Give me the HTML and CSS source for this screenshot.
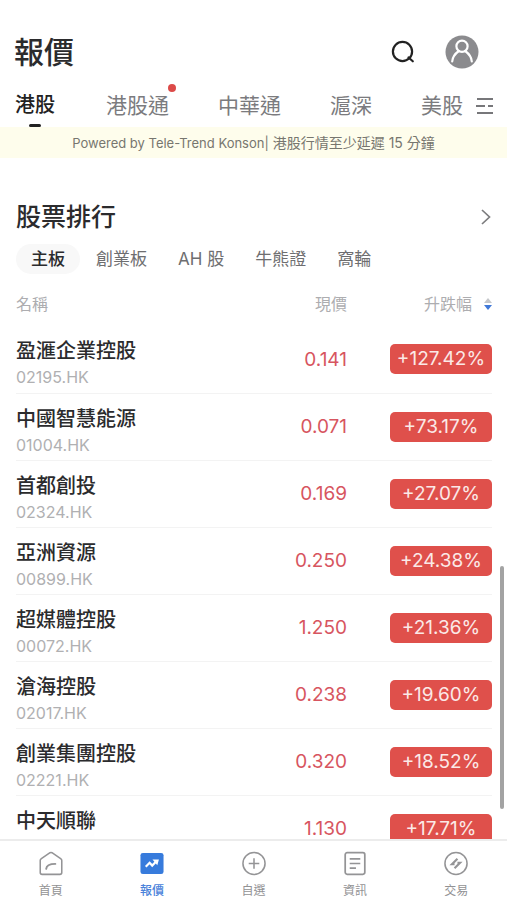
FILE: index.html
```html
<!DOCTYPE html>
<html lang="zh-Hant">
<head>
<meta charset="utf-8">
<meta name="viewport" content="width=device-width, initial-scale=1">
<title>報價</title>
<link rel="stylesheet" href="styles.css">
</head>
<body>
<div class="app">
  <header class="topbar">
    <h1>報價</h1>
    <div class="actions">
      <button class="icon-btn" type="button" aria-label="搜尋">
        <svg width="26" height="26" viewBox="0 0 26 26" fill="none" stroke="#222" stroke-width="2.2" stroke-linecap="round"><circle cx="11.5" cy="12.5" r="9.6"/><path d="M17.5 18.5L21.8 22.3"/></svg>
      </button>
      <button class="icon-btn" type="button" aria-label="帳戶">
        <svg width="34" height="34" viewBox="0 0 34 34" fill="none"><circle cx="17" cy="17" r="16.5" fill="#8b8b8e"/><g stroke="#fff" stroke-width="2.2" stroke-linecap="round"><circle cx="17" cy="11.2" r="5.6"/><path d="M7.2 26.5C7.6 21.5 10.4 18.5 13.8 16M26.8 26.5C26.4 21.5 23.6 18.5 20.2 16"/></g></svg>
      </button>
    </div>
  </header>
  <nav class="markets">
    <a href="#hk" class="market current">港股</a>
    <a href="#connect" class="market has-dot">港股通</a>
    <a href="#china" class="market">中華通</a>
    <a href="#cn" class="market">滬深</a>
    <a href="#us" class="market">美股</a>
    <button class="icon-btn more" type="button" aria-label="更多市場">
      <svg width="18" height="18" viewBox="0 0 18 18" fill="none" stroke="#77777a" stroke-width="2"><path d="M1 2H17M0 9H9M12 9H17M1 16H17"/></svg>
    </button>
  </nav>
  <p class="notice">Powered by Tele-Trend Konson|<span class="notice-zh"> 港股行情至少延遲 15 分鐘</span></p>
  <main class="content">
    <div class="section-head">
      <h2>股票排行</h2>
      <a href="#ranking" class="arrow" aria-label="查看全部">
        <svg width="12" height="18" viewBox="0 0 12 18" fill="none" stroke="#7c7c7e" stroke-width="1.7"><path d="M2 2L9.5 9L2 16"/></svg>
      </a>
    </div>
    <div class="boards">
      <button type="button" class="board chosen">主板</button>
      <button type="button" class="board">創業板</button>
      <button type="button" class="board">AH 股</button>
      <button type="button" class="board">牛熊證</button>
      <button type="button" class="board">窩輪</button>
    </div>
    <table class="quotes">
      <thead>
        <tr><th class="name">名稱</th><th class="price">現價</th><th class="change"><span class="sort">升跌幅<svg width="8" height="12" viewBox="0 0 8 12"><path d="M0 5L4 0L8 5Z" fill="#c4c6ca"/><path d="M0 7L4 12L8 7Z" fill="#3f78d8"/></svg></span></th></tr>
      </thead>
      <tbody>
        <tr><td class="name"><div class="stock">盈滙企業控股</div><div class="code">02195.HK</div></td><td class="price">0.141</td><td class="change"><span class="pill">+127.42%</span></td></tr>
        <tr><td class="name"><div class="stock">中國智慧能源</div><div class="code">01004.HK</div></td><td class="price">0.071</td><td class="change"><span class="pill">+73.17%</span></td></tr>
        <tr><td class="name"><div class="stock">首都創投</div><div class="code">02324.HK</div></td><td class="price">0.169</td><td class="change"><span class="pill">+27.07%</span></td></tr>
        <tr><td class="name"><div class="stock">亞洲資源</div><div class="code">00899.HK</div></td><td class="price">0.250</td><td class="change"><span class="pill">+24.38%</span></td></tr>
        <tr><td class="name"><div class="stock">超媒體控股</div><div class="code">00072.HK</div></td><td class="price">1.250</td><td class="change"><span class="pill">+21.36%</span></td></tr>
        <tr><td class="name"><div class="stock">滄海控股</div><div class="code">02017.HK</div></td><td class="price">0.238</td><td class="change"><span class="pill">+19.60%</span></td></tr>
        <tr><td class="name"><div class="stock">創業集團控股</div><div class="code">02221.HK</div></td><td class="price">0.320</td><td class="change"><span class="pill">+18.52%</span></td></tr>
        <tr><td class="name"><div class="stock">中天順聯</div></td><td class="price">1.130</td><td class="change"><span class="pill">+17.71%</span></td></tr>
      </tbody>
    </table>
    <div class="scroll-thumb"></div>
  </main>
  <nav class="tabbar">
    <a href="#home" class="tab">
      <svg width="26" height="26" viewBox="0 0 26 26" fill="none" stroke="#949496" stroke-width="1.6" stroke-linejoin="round" stroke-linecap="round"><path d="M1.8 9.8Q1.8 8.8 2.6 8.3L12 1.8Q13 1.2 14 1.8L23.4 8.3Q24.200 8.8 24.200 9.8V22.300Q24.200 24.300 22.200 24.300H3.800Q1.800 24.300 1.800 22.300Z"/><path d="M8 18.500C8.300 15.200 11.500 13.400 17.500 13.400" stroke-width="2"/></svg>
      <span>首頁</span>
    </a>
    <a href="#quotes" class="tab active">
      <svg width="26" height="26" viewBox="0 0 26 26" fill="none"><rect x="1" y="2" width="24" height="22" rx="2.5" fill="#377bdc"/><path d="M6.500 16.300L10.500 12.300L13.200 15.200L17.600 10.600" stroke="#fff" stroke-width="2.300"/><path d="M13.500 8.800H20.200L18.500 14.800Z" fill="#fff"/></svg>
      <span>報價</span>
    </a>
    <a href="#watch" class="tab">
      <svg width="26" height="26" viewBox="0 0 26 26" fill="none" stroke="#949496" stroke-width="1.6"><circle cx="13" cy="13" r="11.5"/><path d="M13 7.5V18.5M7.5 13H18.5"/></svg>
      <span>自選</span>
    </a>
    <a href="#news" class="tab">
      <svg width="26" height="26" viewBox="0 0 26 26" fill="none" stroke="#949496" stroke-width="1.8"><rect x="2.800" y="1.800" width="20.400" height="22.400" rx="2"/><path d="M7.500 8.300H18.500M7.500 13H18.500M7.500 17.700H14"/></svg>
      <span>資訊</span>
    </a>
    <a href="#trade" class="tab">
      <svg width="26" height="26" viewBox="0 0 26 26" fill="none" stroke="#949496" stroke-width="1.6"><circle cx="13" cy="13" r="11.5"/><path d="M14.500 8L8.800 13.700H11.500M11.500 18L17.200 12.300H14.500" stroke-width="2.200"/></svg>
      <span>交易</span>
    </a>
  </nav>
</div>
</body>
</html>
```
FILE: styles.css
```css
* { box-sizing: border-box; }

body {
  margin: 0;
  background: #fff;
  color: #2b2b2d;
  font-family: Inter, "Noto Sans CJK TC", sans-serif;
}

a { color: inherit; text-decoration: none; }

button {
  padding: 0;
  border: 0;
  background: none;
  color: inherit;
  font: inherit;
}

.app {
  display: flex;
  flex-direction: column;
  height: 100vh;
  overflow: hidden;
}

.topbar {
  display: flex;
  align-items: center;
  justify-content: space-between;
  padding: 32px 28px 0 14px;
}

h1 {
  margin: 0;
  font-size: 30px;
  line-height: 40px;
  font-weight: 500;
}

.actions { display: flex; align-items: center; gap: 28px; }

.icon-btn { display: flex; }

.markets {
  display: flex;
  align-items: center;
  gap: 49px;
  padding: 12px 12px 0 15px;
}

.market {
  position: relative;
  flex: none;
  height: 43px;
  line-height: 43px;
  font-size: 21px;
  color: #7b7b7e;
}

.current {
  min-width: 42px;
  font-size: 20px;
  font-weight: 500;
  color: #222;
}

.current::after {
  content: "";
  position: absolute;
  left: 14px;
  bottom: 0;
  width: 12px;
  height: 3px;
  border-radius: 2px;
  background: #222;
}

.has-dot::after {
  content: "";
  position: absolute;
  top: 0;
  right: -7px;
  width: 8px;
  height: 8px;
  border-radius: 50%;
  background: #dc4a48;
}

.more { margin-left: -36px; }

.notice {
  height: 31px;
  margin: 0;
  background: #fefdec;
  color: #77766f;
  font-size: 13px;
  line-height: 31px;
  text-align: center;
}

.notice-zh { font-size: 14px; }

.content {
  position: relative;
  flex: 1;
  min-height: 0;
  overflow: hidden;
  padding: 40px 15px 0 16px;
}

.section-head {
  display: flex;
  align-items: center;
  justify-content: space-between;
}

h2 {
  margin: 0;
  font-size: 25px;
  line-height: 38px;
  font-weight: 500;
}

.arrow { display: flex; }

.boards { display: flex; gap: 1px; margin-top: 8px; }

.board {
  padding: 0 15px;
  border-radius: 15px;
  font-size: 17px;
  line-height: 30px;
  color: #6e6e70;
}

.chosen {
  background: #f8f8f8;
  color: #2b2b2d;
  font-weight: 500;
}

.quotes {
  width: 100%;
  margin-top: 14px;
  border-collapse: collapse;
  table-layout: fixed;
}

th {
  height: 38px;
  padding: 0;
  font-size: 16px;
  line-height: 32px;
  font-weight: 400;
  text-align: left;
  vertical-align: top;
  color: #adadb0;
}

td { height: 67px; padding: 0; }

td.name { padding-top: 11px; vertical-align: top; }

tbody tr { border-bottom: 1px solid #f3f3f3; }

.price {
  width: 100px;
  text-align: right;
  font-size: 19px;
  color: #d75560;
}

th.price { font-size: 16px; color: #adadb0; }

.change { width: 145px; text-align: right; }

.sort { display: inline-flex; align-items: center; gap: 12px; }

.pill {
  display: inline-block;
  width: 102px;
  border-radius: 5px;
  background: #df504b;
  color: #fbe9e7;
  font-size: 19px;
  line-height: 30px;
  text-align: center;
}

.stock { font-size: 20px; line-height: 28px; font-weight: 500; }

.code {
  font-size: 16px;
  line-height: 24px;
  color: #b0b0b2;
}

.scroll-thumb {
  position: absolute;
  right: 3px;
  bottom: 30px;
  width: 4px;
  height: 243px;
  border-radius: 2px;
  background: #a3a3a3;
}

.tabbar {
  display: flex;
  height: 61px;
  border-top: 2px solid #ececec;
}

.tab {
  flex: 1;
  display: flex;
  flex-direction: column;
  align-items: center;
  padding-top: 10px;
  gap: 6px;
  font-size: 12px;
  line-height: 18px;
  color: #929294;
}

.active { color: #4a82da; font-weight: 500; }
```
